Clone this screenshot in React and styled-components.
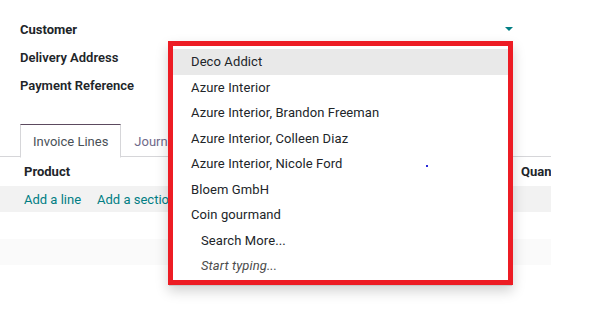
import React from 'react'
import styled, { createGlobalStyle } from 'styled-components'

const GlobalStyle = createGlobalStyle`
  body {
    margin: 0;
    background: #fff;
    font-family: Roboto, "Liberation Sans", sans-serif;
    font-size: 13px;
    color: #212529;
  }
`

const Page = styled.div`
  position: relative;
  width: 607px;
  height: 315px;
  overflow: hidden;
`

const Fields = styled.div`
  padding: 15px 0 0 20px;
  width: 493px;
`

const FieldRow = styled.div`
  display: flex;
  align-items: center;
  justify-content: space-between;
  height: 28px;
`

const Label = styled.span`
  font-weight: ${props => (props.heavy ? 700 : 600)};
  color: #212529;
`

const Caret = styled.span`
  width: 0;
  height: 0;
  border-left: 4px solid transparent;
  border-right: 4px solid transparent;
  border-top: 4px solid #017e84;
`

const TabNav = styled.div`
  display: flex;
  margin-top: 25px;
  padding-left: 20px;
  width: 531px;
  border-bottom: 1px solid #d6d6d9;
  height: 32px;
`

const Tab = styled.div`
  display: flex;
  align-items: center;
  padding: 0 12px;
  height: 32px;
  margin-bottom: -1px;
  border: 1px solid ${props => (props.active ? '#d6d6d9' : 'transparent')};
  border-top: 1px solid ${props => (props.active ? '#5c4a5f' : 'transparent')};
  border-bottom: 1px solid ${props => (props.active ? '#fff' : 'transparent')};
  background: ${props => (props.active ? '#fff' : 'transparent')};
  color: ${props => (props.active ? '#495057' : '#6f6a8a')};
`

const Table = styled.div`
  width: 551px;
`

const Row = styled.div`
  display: flex;
  align-items: center;
  justify-content: space-between;
  height: ${props => props.h}px;
  padding: 0 0 0 24px;
  background: ${props => props.bg || '#fff'};
`

const HeadCell = styled.span`
  font-weight: 700;
  color: #212529;
`

const QuanCell = styled.span`
  font-weight: 700;
  width: 30px;
  overflow: hidden;
  white-space: nowrap;
`

const Links = styled.div`
  display: flex;
  gap: 16px;
`

const Link = styled.span`
  color: #017e84;
`

const Dropdown = styled.ul`
  position: absolute;
  left: 168px;
  top: 41px;
  width: 335px;
  margin: 0;
  padding: 3px 0 1px;
  list-style: none;
  background: #fff;
  border: 5px solid #ed1c24;
  box-shadow: 0 2px 0 -1px #c9c9c9, 0 6px 12px rgba(0, 0, 0, 0.18);
`

const Item = styled.li`
  padding: 3px 0 3px ${props => (props.indent ? 28 : 18)}px;
  line-height: 19.5px;
  letter-spacing: 0.1px;
  color: ${props => (props.muted ? '#4c4c4c' : '#212529')};
  font-style: ${props => (props.italic ? 'italic' : 'normal')};
  background: ${props => (props.active ? '#e9e9e9' : 'transparent')};
`

const Dot = styled.span`
  position: absolute;
  left: 426px;
  top: 165px;
  width: 2px;
  height: 2px;
  background: #2a2ad8;
`

const partners = [
  'Deco Addict',
  'Azure Interior',
  'Azure Interior, Brandon Freeman',
  'Azure Interior, Colleen Diaz',
  'Azure Interior, Nicole Ford',
  'Bloem GmbH',
  'Coin gourmand',
]

export default function App() {
  return (
    <Page>
      <GlobalStyle />
      <Fields>
        <FieldRow>
          <Label heavy>Customer</Label>
          <Caret />
        </FieldRow>
        <FieldRow>
          <Label>Delivery Address</Label>
        </FieldRow>
        <FieldRow>
          <Label>Payment Reference</Label>
        </FieldRow>
      </Fields>

      <TabNav>
        <Tab active>Invoice Lines</Tab>
        <Tab>Journal Items</Tab>
      </TabNav>

      <Table>
        <Row h={29}>
          <HeadCell>Product</HeadCell>
          <QuanCell>Quantity</QuanCell>
        </Row>
        <Row h={26} bg="#f2f2f2">
          <Links>
            <Link>Add a line</Link>
            <Link>Add a section</Link>
          </Links>
        </Row>
        <Row h={27} />
        <Row h={26} bg="#fafafa" />
      </Table>

      <Dropdown>
        {partners.map((name, i) => (
          <Item key={name} active={i === 0}>
            {name}
          </Item>
        ))}
        <Item indent>Search More...</Item>
        <Item indent italic muted>Start typing...</Item>
      </Dropdown>
      <Dot />
    </Page>
  )
}
